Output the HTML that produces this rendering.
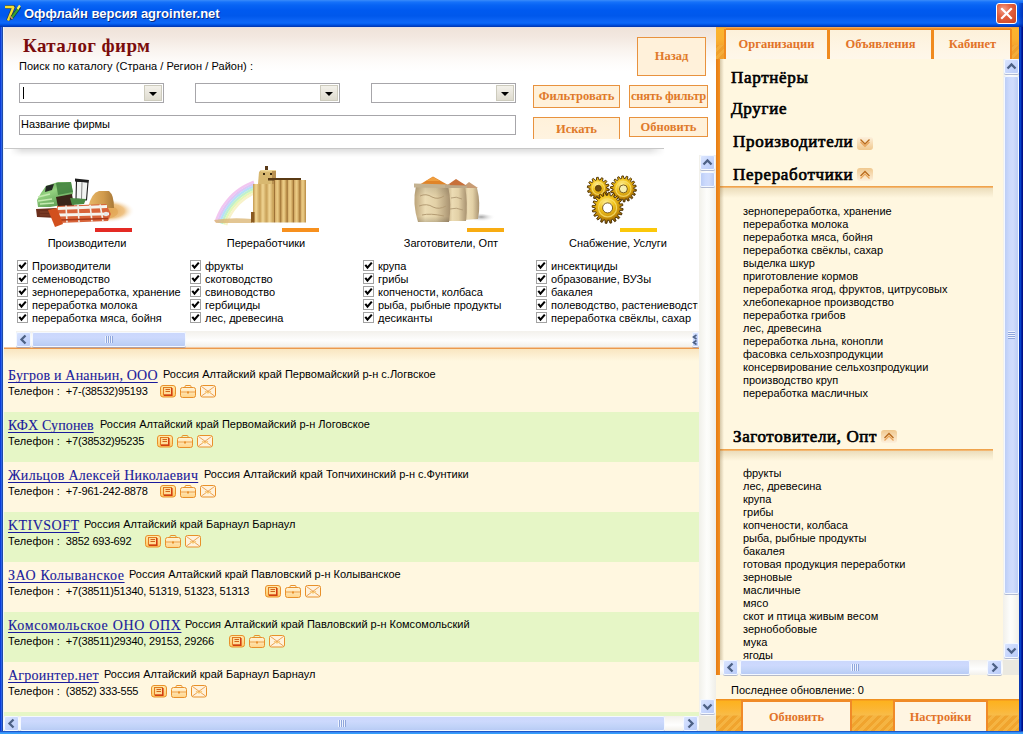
<!DOCTYPE html>
<html><head><meta charset="utf-8"><style>
*{box-sizing:border-box}
html,body{margin:0;padding:0;width:1023px;height:734px;overflow:hidden;background:#0a3fd0;font-family:"Liberation Sans",sans-serif;font-size:11px;color:#000}
.a{position:absolute}
.t{position:absolute;white-space:nowrap;line-height:13px}
.ser{font-family:"Liberation Serif",serif}
#title{left:0;top:0;width:1023px;height:27px;background:linear-gradient(#3a8cfa 0px,#1672fa 2px,#0864f4 5px,#005af0 10px,#0058ec 16px,#0a62f4 20px,#0c68f8 23px,#0056e8 24.5px,#0040c4 26px,#0036ac 27px)}
#ttxt{left:24px;top:5px;font:bold 13px "Liberation Sans",sans-serif;color:#fff;line-height:17px;text-shadow:1px 1px 0 #0a2a80}
#close{left:996px;top:3px;width:21px;height:21px;border:1px solid #fff;border-radius:3px;background:radial-gradient(circle at 35% 30%,#f2a08a 0%,#e2603e 40%,#c94422 100%)}
#hdr{left:3px;top:27px;width:713px;height:122px;background:linear-gradient(#dfe0ee 0px,#efe3da 1px,#f3e8e0 10px,#f9f3ee 22px,#fdfbf9 34px,#fff 44px)}
.dd{position:absolute;height:20px;width:145px;border:1px solid #a7a6aa;background:#fff}
.dd .bt{position:absolute;right:1px;top:1px;width:18px;height:16px;background:linear-gradient(#f3f1ea,#dedbcf);border:1px solid #cdcbbd}
.dd .bt:after{content:"";position:absolute;left:4px;top:6px;border-left:4px solid transparent;border-right:4px solid transparent;border-top:4px solid #000}
.ob{position:absolute;border:1px solid #e8923e;background:#fff1da;color:#e07a2a;font:bold 12.5px "Liberation Serif",serif;text-align:center}
.sbtn{position:absolute;width:15px;height:15px;border-radius:2px;background:linear-gradient(135deg,#dde7fe 0%,#c8d7fd 50%,#b8caf6 100%);box-shadow:inset 0 0 0 1px #f4f8ff,0 1px 0 rgba(90,110,170,0.45)}
.thumbv{position:absolute;border-radius:2px;background:linear-gradient(90deg,#b9cbf4,#cbd9fd 35%,#d0dcfc 60%,#b7caf3);box-shadow:inset 0 0 0 1px #f4f8ff,0 1px 0 rgba(90,110,170,0.45)}
.thumbh{position:absolute;border-radius:2px;background:linear-gradient(#cad7fc,#cdd9fd 35%,#c1d3f8 70%,#b6c9f4);box-shadow:inset 0 0 0 1px #f4f8ff,0 1px 0 rgba(90,110,170,0.45)}
.chev{position:absolute;left:0;top:0}
.cb{position:absolute;width:11px;height:11px;border:1px solid #a2a2a2;background:#fff}
.lnk{position:absolute;white-space:nowrap;font-family:"Liberation Serif",serif;font-size:14px;line-height:17px;color:#1a1a9c;text-decoration:underline;text-underline-offset:2px;text-decoration-skip-ink:none;-webkit-text-stroke:0.1px #1a1a9c}
.tab{background:linear-gradient(#fdf1da,#fef5e4 60%,#fef7ea);color:#e27328;font:bold 12.5px "Liberation Serif",serif;text-align:center}
.tab2{background:#fff5e2;border-left:2px solid #f08a28;border-right:2px solid #f08a28;border-top:2px solid #f08a28;color:#e27328;font:bold 12.3px "Liberation Serif",serif;text-align:center}
.rh{font:17px "Liberation Serif",serif;line-height:20px;color:#000;letter-spacing:0.7px;-webkit-text-stroke:0.65px #000}

.blk{background:linear-gradient(#f2a040 0px,#fcb42c 2px,#fab030 12px,#f6a62e 18px,rgba(0,0,0,0) 18px),repeating-linear-gradient(135deg,#f0a02c 0 3px,#f4ac3a 3px 6px)}
.bbar{background:linear-gradient(#f09020 0px,#f09020 1px,#fdb21e 2px,#fbb634 10px,#f8bc48 16px,rgba(0,0,0,0) 17px),repeating-linear-gradient(135deg,#f0a42e 0 3px,#f5b442 3px 6px)}
</style></head><body>
<svg width="0" height="0" style="position:absolute">
<defs>
<linearGradient id="ig1" x1="0" y1="0" x2="0" y2="1"><stop offset="0" stop-color="#ffeab0"/><stop offset="1" stop-color="#ffc864"/></linearGradient>
<linearGradient id="ig2" x1="0" y1="0" x2="0" y2="1"><stop offset="0" stop-color="#fff4d8"/><stop offset="1" stop-color="#ffd488"/></linearGradient>
<symbol id="i1" viewBox="0 0 16 13"><rect x="0.5" y="0.5" width="15" height="11.5" rx="2.5" fill="url(#ig1)" stroke="#e8902a"/><rect x="3.5" y="2.5" width="8" height="7.5" fill="#ffdc98" stroke="#e07a20"/><path d="M4 10.2 H11.8 V3" stroke="#d23e10" stroke-width="1.6" fill="none"/><path d="M5.5 4.5h4.5M5.5 6.5h4.5" stroke="#d0641c" stroke-width="1"/></symbol>
<symbol id="i2" viewBox="0 0 16 13"><rect x="5" y="0.5" width="6" height="2.5" rx="1" fill="none" stroke="#e8902a"/><rect x="0.5" y="2.5" width="15" height="10" rx="2" fill="url(#ig2)" stroke="#e8902a"/><path d="M1 7h14" stroke="#eca04a"/><rect x="7" y="6.5" width="2" height="2" fill="#e8902a"/></symbol>
<symbol id="i3" viewBox="0 0 16 13"><rect x="0.5" y="0.5" width="15" height="11.5" rx="2" fill="#fff2dc" stroke="#e8902a"/><path d="M1.5 1.5 L14.5 11 M14.5 1.5 L1.5 11" stroke="#e89a46" stroke-width="0.9" fill="none"/><path d="M5 6.2 L8 8 L11 6.2" stroke="#f8c870" stroke-width="1.2" fill="none"/></symbol>
<symbol id="chk" viewBox="0 0 9 9"><path d="M1.3 3.8 L3.5 6.6 L7.8 1.6" stroke="#000" stroke-width="2.1" fill="none"/></symbol>
<linearGradient id="icg1" x1="0" y1="0" x2="0" y2="1"><stop offset="0" stop-color="#fdf0dc"/><stop offset="1" stop-color="#f0c88e"/></linearGradient>
<linearGradient id="icg2" x1="0" y1="0" x2="0" y2="1"><stop offset="0" stop-color="#f0c88e"/><stop offset="1" stop-color="#fdf0dc"/></linearGradient>
<symbol id="dn" viewBox="0 0 16 13"><rect x="0" y="0" width="16" height="13" rx="3" fill="url(#icg1)"/><path d="M3.5 5 L8 9.5 L12.5 5" stroke="#eaa458" stroke-width="1.2" fill="none"/><path d="M3.5 2.5 L8 7 L12.5 2.5" stroke="#b86a1c" stroke-width="1.3" fill="none"/></symbol>
<symbol id="up" viewBox="0 0 16 13"><rect x="0" y="0" width="16" height="13" rx="3" fill="url(#icg2)"/><path d="M3.5 8 L8 3.5 L12.5 8" stroke="#b86a1c" stroke-width="1.3" fill="none"/><path d="M3.5 10.5 L8 6 L12.5 10.5" stroke="#eaa458" stroke-width="1.2" fill="none"/></symbol>
</defs></svg>
<div id="title" class="a"></div>
<svg class="a" style="left:0;top:0" width="24" height="26" viewBox="0 0 24 26">
 <path d="M5 7 H13.5 L8 20.5" stroke="#3a2a00" stroke-width="4" fill="none" stroke-linejoin="round" opacity="0.55"/>
 <path d="M5 7 H13.5 L8 20.5" stroke="#f4e030" stroke-width="2.4" fill="none" stroke-linejoin="bevel"/>
 <path d="M11.5 18 L19 8" stroke="#10240a" stroke-width="3.6" stroke-linecap="round" opacity="0.7"/>
 <path d="M11.5 18 L18.5 8.5" stroke="#38a030" stroke-width="2.2"/>
 <path d="M17.5 9 L20 5.5" stroke="#f8f060" stroke-width="2.2"/>
 <path d="M10 16 L12.5 19" stroke="#c89070" stroke-width="1.5"/>
</svg>
<div id="ttxt" class="a">Оффлайн версия agrointer.net</div>
<div id="close" class="a"><svg width="19" height="19" viewBox="0 0 19 19" style="position:absolute;left:0;top:0"><path d="M5 5 L14 14 M14 5 L5 14" stroke="#fff" stroke-width="2.2" stroke-linecap="square"/></svg></div>
<div id="hdr" class="a"></div>
<div class="t ser" style="left:23px;top:35px;font-weight:bold;font-size:19px;line-height:22px;letter-spacing:0.4px;color:#7a0c0c">Каталог фирм</div>
<div class="t" style="left:19px;top:60px;letter-spacing:0.05px">Поиск по каталогу (Страна / Регион / Район) :</div>
<div class="dd" style="left:19px;top:83px"><div class="a" style="left:3px;top:3px;width:1px;height:12px;background:#000"></div><div class="bt"></div></div>
<div class="dd" style="left:195px;top:83px"><div class="bt"></div></div>
<div class="dd" style="left:371px;top:83px"><div class="bt"></div></div>
<div class="a" style="left:19px;top:115px;width:497px;height:20px;border:1px solid #a7a6aa;background:#fff"></div>
<div class="t" style="left:21px;top:118px">Название фирмы</div>
<div class="ob" style="left:637px;top:37px;width:69px;height:39px;line-height:37px">Назад</div>
<div class="ob" style="left:533px;top:85px;width:87px;height:23px;line-height:21px">Фильтровать</div>
<div class="ob" style="left:629px;top:85px;width:79px;height:23px;line-height:21px;letter-spacing:-0.2px">снять фильтр</div>
<div class="ob" style="left:533px;top:117px;width:87px;height:22px;line-height:22px;border-bottom:none;background:linear-gradient(#fff1da,#fff3e0)">Искать</div>
<div class="ob" style="left:629px;top:117px;width:79px;height:20px;line-height:18px">Обновить</div>
<div class="a" style="left:4px;top:148px;width:660px;height:1px;background:#c8c8c8"></div>
<div class="a" style="left:3px;top:149px;width:697px;height:198px;background:#fff"></div>
<div class="a" style="left:10px;top:149px;width:655px;height:8px;background:linear-gradient(rgba(0,0,0,0.13),rgba(0,0,0,0.03) 70%,rgba(0,0,0,0));-webkit-mask-image:linear-gradient(90deg,transparent,#000 12px,#000 640px,transparent)"></div>
<div class="a" style="left:3px;top:349px;width:696px;height:63px;background:#fff7e0"></div>
<div class="a" style="left:3px;top:412px;width:696px;height:50px;background:#e6f6c6"></div>
<div class="a" style="left:3px;top:462px;width:696px;height:50px;background:#fff7e0"></div>
<div class="a" style="left:3px;top:512px;width:696px;height:50px;background:#e6f6c6"></div>
<div class="a" style="left:3px;top:562px;width:696px;height:50px;background:#fff7e0"></div>
<div class="a" style="left:3px;top:612px;width:696px;height:50px;background:#e6f6c6"></div>
<div class="a" style="left:3px;top:662px;width:696px;height:50px;background:#fff7e0"></div>
<div class="a" style="left:3px;top:712px;width:696px;height:4px;background:#e6f6c6"></div>
<div class="a" style="left:3px;top:349px;width:696px;height:12px;background:linear-gradient(rgba(235,190,120,0.30),rgba(235,190,120,0))"></div>
<div class="a" style="left:3px;top:347px;width:697px;height:1px;background:#f4c8a0"></div>
<div class="a" style="left:3px;top:348px;width:697px;height:1px;background:#eb9a4e"></div>
<div class="a" style="left:3px;top:27px;width:1px;height:704px;background:#eef6fb"></div>
<svg class="a" style="left:30px;top:170px" width="110" height="62" viewBox="30 170 110 62">
<defs><radialGradient id="fld" cx="50%" cy="50%" r="50%"><stop offset="0" stop-color="#e0a048"/><stop offset="0.6" stop-color="#ecb870" stop-opacity="0.85"/><stop offset="1" stop-color="#fff" stop-opacity="0"/></radialGradient>
<linearGradient id="grn" x1="0" y1="0" x2="0.6" y2="1"><stop offset="0" stop-color="#4e9048"/><stop offset="0.45" stop-color="#94d280"/><stop offset="1" stop-color="#5a9a52"/></linearGradient>
<linearGradient id="pile" x1="0" y1="0" x2="1" y2="0"><stop offset="0" stop-color="#e8b868"/><stop offset="0.6" stop-color="#d09a4c"/><stop offset="1" stop-color="#a87838"/></linearGradient></defs>
<ellipse cx="108" cy="211" rx="27" ry="12" fill="url(#fld)"/><ellipse cx="104" cy="212" rx="14" ry="7" fill="#e2a655" opacity="0.7"/>
<path d="M88 208 Q91 193 99 191 L109 191 Q114 195 114 208 Z" fill="url(#pile)"/>
<path d="M37 200 L41 193 L46 186 L58 182 L71 182 L73 193 L68 204 L50 207 L38 207 Z" fill="url(#grn)"/>
<path d="M56 183 L71 182 L73 192 L58 195 Z" fill="#3c7a3a" opacity="0.8"/>
<path d="M38 197 L50 194 M38 201 L52 199 M40 204 L54 203" stroke="#c4eab0" stroke-width="1.3"/>
<path d="M46 186 L54 184 L52 190 L45 192 Z" fill="#242824"/>
<path d="M56 197 L72 194 L74 206 L58 207 Z" fill="#3a2418"/>
<path d="M76.5 181 L88 182 L86.5 200 L76 199 Z" fill="#f2f4f2" stroke="#1c1c1c" stroke-width="1.1"/>
<path d="M75 178.5 L89 180 L88.5 182.5 L75 181.5 Z" fill="#1e1e1e"/>
<path d="M82 182 L81.5 199" stroke="#5a5a5a" stroke-width="0.7"/>
<path d="M70 198 L86 199 L84 204 L72 205 Z" fill="#4a8a44"/>
<path d="M36 209 L56 208 L57 218 L37 217 Z" fill="#6a2e1c"/>
<path d="M40 212h14 M40 215h14" stroke="#8a4a30" stroke-width="0.8"/>
<path d="M57 206 L106 204 L111 214 L108 221 L59 223 Z" fill="#d8643a"/>
<path d="M58 208.5 L107 206.5 M59 215 L109 213.8" stroke="#f6f4ee" stroke-width="2.8"/>
<path d="M66 205.5 L67 222.5 M78 205 L79 222 M90 204.8 L92 221.5 M100 204.5 L103 221" stroke="#f0eee8" stroke-width="1.6"/>
<path d="M60 220 L108 218.5" stroke="#a83818" stroke-width="1.4"/>
<circle cx="106" cy="214" r="2.2" fill="#e8e8e8"/>
<path d="M48 210 L57 208 L63 224 L55 227 Z" fill="#d2501e"/>
</svg>
<svg class="a" style="left:205px;top:160px" width="110" height="66" viewBox="205 160 110 66">
<defs><linearGradient id="rb" x1="0" y1="0" x2="1" y2="0.35">
<stop offset="0" stop-color="#fff" stop-opacity="0"/><stop offset="0.22" stop-color="#f0c0f0"/><stop offset="0.45" stop-color="#a8e4f8"/><stop offset="0.65" stop-color="#c0f0b0"/><stop offset="0.82" stop-color="#f8f0a8"/><stop offset="1" stop-color="#fff" stop-opacity="0"/></linearGradient>
<linearGradient id="cylL" x1="0" y1="0" x2="1" y2="0"><stop offset="0" stop-color="#c49a50"/><stop offset="0.45" stop-color="#f2d896"/><stop offset="1" stop-color="#c8a058"/></linearGradient>
<linearGradient id="cylR" x1="0" y1="0" x2="1" y2="0"><stop offset="0" stop-color="#7a4c16"/><stop offset="0.2" stop-color="#d8b06a"/><stop offset="0.55" stop-color="#eed08a"/><stop offset="1" stop-color="#b88a44"/></linearGradient>
<pattern id="pL" x="253" y="0" width="6.7" height="100" patternUnits="userSpaceOnUse"><rect width="6.7" height="100" fill="url(#cylL)"/></pattern>
<pattern id="pR" x="274" y="0" width="6.4" height="100" patternUnits="userSpaceOnUse"><rect width="6.4" height="100" fill="url(#cylR)"/></pattern>
</defs>
<g opacity="0.95"><path d="M215.7 221.9 L217.0 218.0 L218.6 214.2 L220.4 210.6 L222.5 207.0 L224.8 203.6 L227.3 200.4 L230.0 197.3 L232.9 194.4 L236.0 191.8 L239.3 189.3 L242.7 187.1 L246.3 185.0 L250.0 183.3 L253.8 181.7" stroke="#f2c4f0" stroke-width="2.4" fill="none"/><path d="M217.8 222.5 L219.1 218.8 L220.6 215.1 L222.4 211.6 L224.4 208.2 L226.6 204.9 L229.0 201.8 L231.6 198.8 L234.4 196.1 L237.4 193.5 L240.6 191.1 L243.9 188.9 L247.3 187.0 L250.9 185.3 L254.5 183.8" stroke="#dcc4f6" stroke-width="2.4" fill="none"/><path d="M219.9 223.2 L221.1 219.6 L222.6 216.0 L224.3 212.6 L226.2 209.4 L228.4 206.2 L230.7 203.2 L233.2 200.4 L235.9 197.7 L238.8 195.2 L241.8 192.9 L245.0 190.8 L248.3 188.9 L251.8 187.3 L255.3 185.9" stroke="#b4def8" stroke-width="2.4" fill="none"/><path d="M222.0 223.8 L223.2 220.3 L224.6 217.0 L226.2 213.7 L228.1 210.5 L230.1 207.5 L232.4 204.6 L234.8 201.9 L237.4 199.3 L240.2 196.9 L243.1 194.7 L246.2 192.7 L249.4 190.9 L252.7 189.3 L256.1 187.9" stroke="#bcf0cc" stroke-width="2.4" fill="none"/><path d="M224.1 224.4 L225.3 221.1 L226.6 217.9 L228.2 214.7 L230.0 211.7 L231.9 208.8 L234.1 206.0 L236.4 203.4 L238.9 200.9 L241.6 198.6 L244.4 196.5 L247.3 194.6 L250.4 192.8 L253.5 191.3 L256.8 190.0" stroke="#e4f6b4" stroke-width="2.4" fill="none"/><path d="M226.2 225.1 L227.3 221.9 L228.6 218.8 L230.1 215.8 L231.8 212.9 L233.7 210.1 L235.8 207.4 L238.0 204.9 L240.4 202.5 L243.0 200.3 L245.6 198.3 L248.5 196.4 L251.4 194.8 L254.4 193.3 L257.6 192.1" stroke="#f8f2c8" stroke-width="2.4" fill="none"/></g>
<path d="M214 220 Q232 217 252 219 L252 223 L216 223 Z" fill="#dcb878" opacity="0.8"/>
<path d="M258 184 L259 172 L261 170 L276 170 L276 184 Z" fill="#d8b870"/>
<rect x="261" y="170" width="15" height="1.5" fill="#f0d898"/><rect x="272" y="171" width="4" height="13" fill="#b89050"/>
<rect x="265" y="166" width="3" height="4" fill="#5a3a18"/>
<rect x="263" y="173" width="2" height="2" fill="#3a2a10"/><rect x="270" y="173" width="2" height="2" fill="#3a2a10"/>
<rect x="268" y="178" width="33" height="2.5" fill="#5a3a14"/>
<rect x="253" y="184" width="21" height="38.5" fill="url(#pL)"/>
<rect x="274" y="180" width="32" height="42.5" fill="url(#pR)"/>
<rect x="251" y="212" width="3.5" height="10.5" fill="#8a5a20"/>
</svg>
<svg class="a" style="left:410px;top:170px" width="90" height="56" viewBox="410 170 90 56">
<defs><linearGradient id="sk" x1="0" y1="0" x2="1" y2="0"><stop offset="0" stop-color="#bca47a"/><stop offset="0.3" stop-color="#ecdcb4"/><stop offset="0.6" stop-color="#e2d0a6"/><stop offset="1" stop-color="#a89270"/></linearGradient>
<linearGradient id="skv" x1="0" y1="0" x2="0" y2="1"><stop offset="0" stop-color="#000" stop-opacity="0.12"/><stop offset="0.3" stop-color="#000" stop-opacity="0"/><stop offset="0.85" stop-color="#000" stop-opacity="0"/><stop offset="1" stop-color="#000" stop-opacity="0.15"/></linearGradient>
<radialGradient id="shd" cx="30%" cy="50%" r="60%"><stop offset="0" stop-color="#808080" stop-opacity="0.75"/><stop offset="1" stop-color="#fff" stop-opacity="0"/></radialGradient></defs>
<path d="M476 213 L498 216 L492 221 L474 221 Z" fill="url(#shd)"/>
<path d="M463 187 L477 188 Q481 203 478 219 L464 220 Z" fill="url(#sk)"/>
<path d="M446 185 L465 186 Q468 203 466 221 L447 221 Z" fill="url(#sk)"/>
<path d="M416 186 L448 186 Q452 203 449 222 L418 222 Q412 203 416 186 Z" fill="url(#sk)"/>
<path d="M416 186 L448 186 Q452 203 449 222 L418 222 Q412 203 416 186 Z" fill="url(#skv)"/>
<path d="M462 188 L469 182 L478 188 Z" fill="#c89c74"/>
<path d="M446 186 L456 179 L467 186 Z" fill="#c8703a"/>
<path d="M419 185 L433 176.5 L448 185 Z" fill="#e08428"/><path d="M426 181 L433 177 L440 181 Z" fill="#f0a040"/>

<path d="M414 183.5 L450 184.5 L450 188 L414 187.5 Z" fill="#c4b290"/>
<path d="M445 185 L467 185.5 L467 188 L445 188 Z" fill="#bca888"/>
<path d="M420 196 Q426 193 432 197 Q438 200 444 196 M419 206 Q427 203 433 207 Q439 210 446 206 M422 215 Q430 213 444 216" stroke="#b49c74" stroke-width="1" fill="none"/>
<path d="M451 198 Q456 196 462 199 M450 209 Q456 207 463 210" stroke="#b09a74" stroke-width="0.9" fill="none"/>
</svg>
<svg class="a" style="left:580px;top:172px" width="60" height="56" viewBox="580 172 60 56"><defs><radialGradient id="gg" cx="45%" cy="35%" r="70%"><stop offset="0" stop-color="#fff2a0"/><stop offset="0.35" stop-color="#f2c41c"/><stop offset="0.7" stop-color="#c48a08"/><stop offset="1" stop-color="#5a3800"/></radialGradient></defs><path d="M606.80,188.30 L609.28,189.04 L609.02,190.75 L606.44,190.74 L605.96,191.99 L607.87,193.73 L606.90,195.16 L604.57,194.03 L603.60,194.95 L604.56,197.34 L603.07,198.21 L601.46,196.19 L600.19,196.59 L600.02,199.16 L598.30,199.30 L597.73,196.78 L596.41,196.59 L595.14,198.84 L593.53,198.21 L594.11,195.69 L593.00,194.95 L590.88,196.42 L589.70,195.16 L591.31,193.14 L590.64,191.99 L588.09,192.40 L587.58,190.75 L589.90,189.63 L589.80,188.30 L587.32,187.56 L587.58,185.85 L590.16,185.86 L590.64,184.61 L588.73,182.87 L589.70,181.44 L592.03,182.57 L593.00,181.65 L592.04,179.26 L593.53,178.39 L595.14,180.41 L596.41,180.01 L596.58,177.44 L598.30,177.30 L598.87,179.82 L600.19,180.01 L601.46,177.76 L603.07,178.39 L602.49,180.91 L603.60,181.65 L605.72,180.18 L606.90,181.44 L605.29,183.46 L605.96,184.61 L608.51,184.20 L609.02,185.85 L606.70,186.97Z" fill="url(#gg)" stroke="#4a2e00" stroke-width="0.9"/><circle cx="598.3" cy="188.3" r="6.12" fill="none" stroke="#f8e070" stroke-width="1.2" opacity="0.8"/><circle cx="598.3" cy="188.3" r="3" fill="#6a4a10" stroke="#5a3a00" stroke-width="0.8"/><path d="M633.90,188.90 L636.38,189.58 L636.20,191.16 L633.63,191.26 L633.27,192.49 L635.37,193.98 L634.66,195.40 L632.21,194.62 L631.44,195.65 L632.91,197.77 L631.76,198.86 L629.72,197.29 L628.65,197.99 L629.30,200.48 L627.85,201.12 L626.47,198.94 L625.22,199.24 L624.98,201.80 L623.40,201.90 L622.85,199.39 L621.58,199.24 L620.48,201.57 L618.95,201.12 L619.30,198.57 L618.15,197.99 L616.32,199.80 L615.04,198.86 L616.24,196.58 L615.36,195.65 L613.02,196.72 L612.14,195.40 L614.04,193.67 L613.53,192.49 L610.97,192.70 L610.60,191.16 L612.98,190.18 L612.90,188.90 L610.42,188.22 L610.60,186.64 L613.17,186.54 L613.53,185.31 L611.43,183.82 L612.14,182.40 L614.59,183.18 L615.36,182.15 L613.89,180.03 L615.04,178.94 L617.08,180.51 L618.15,179.81 L617.50,177.32 L618.95,176.68 L620.33,178.86 L621.58,178.56 L621.82,176.00 L623.40,175.90 L623.95,178.41 L625.22,178.56 L626.32,176.23 L627.85,176.68 L627.50,179.23 L628.65,179.81 L630.48,178.00 L631.76,178.94 L630.56,181.22 L631.44,182.15 L633.78,181.08 L634.66,182.40 L632.76,184.13 L633.27,185.31 L635.83,185.10 L636.20,186.64 L633.82,187.62Z" fill="url(#gg)" stroke="#4a2e00" stroke-width="0.9"/><circle cx="623.4" cy="188.9" r="7.56" fill="none" stroke="#f8e070" stroke-width="1.2" opacity="0.8"/><circle cx="623.4" cy="188.9" r="4" fill="#f8f0b0" stroke="#5a3a00" stroke-width="0.8"/><path d="M620.10,207.90 L623.08,208.63 L622.91,210.32 L619.84,210.43 L619.49,211.76 L622.10,213.38 L621.41,214.94 L618.46,214.09 L617.71,215.25 L619.70,217.59 L618.56,218.86 L616.01,217.15 L614.95,218.01 L616.11,220.86 L614.64,221.71 L612.74,219.29 L611.46,219.79 L611.69,222.85 L610.02,223.21 L608.97,220.32 L607.60,220.40 L606.87,223.38 L605.18,223.21 L605.07,220.14 L603.74,219.79 L602.12,222.40 L600.56,221.71 L601.41,218.76 L600.25,218.01 L597.91,220.00 L596.64,218.86 L598.35,216.31 L597.49,215.25 L594.64,216.41 L593.79,214.94 L596.21,213.04 L595.71,211.76 L592.65,211.99 L592.29,210.32 L595.18,209.27 L595.10,207.90 L592.12,207.17 L592.29,205.48 L595.36,205.37 L595.71,204.04 L593.10,202.42 L593.79,200.86 L596.74,201.71 L597.49,200.55 L595.50,198.21 L596.64,196.94 L599.19,198.65 L600.25,197.79 L599.09,194.94 L600.56,194.09 L602.46,196.51 L603.74,196.01 L603.51,192.95 L605.18,192.59 L606.23,195.48 L607.60,195.40 L608.33,192.42 L610.02,192.59 L610.13,195.66 L611.46,196.01 L613.08,193.40 L614.64,194.09 L613.79,197.04 L614.95,197.79 L617.29,195.80 L618.56,196.94 L616.85,199.49 L617.71,200.55 L620.56,199.39 L621.41,200.86 L618.99,202.76 L619.49,204.04 L622.55,203.81 L622.91,205.48 L620.02,206.53Z" fill="url(#gg)" stroke="#4a2e00" stroke-width="0.9"/><circle cx="607.6" cy="207.9" r="9.00" fill="none" stroke="#f8e070" stroke-width="1.2" opacity="0.8"/><circle cx="607.6" cy="207.9" r="5" fill="#fff" stroke="#5a3a00" stroke-width="0.8"/></svg>

<div class="a" style="left:95px;top:228px;width:37px;height:4px;background:#e42a24"></div>
<div class="a" style="left:282px;top:228px;width:37px;height:4px;background:#f7901e"></div>
<div class="a" style="left:467px;top:228px;width:37px;height:4px;background:#f8ac12"></div>
<div class="a" style="left:620px;top:228px;width:37px;height:4px;background:#fbc80a"></div>
<div class="t" style="left:-13px;width:200px;text-align:center;top:237px">Производители</div>
<div class="t" style="left:166px;width:200px;text-align:center;top:237px">Переработчики</div>
<div class="t" style="left:351px;width:200px;text-align:center;top:237px">Заготовители, Опт</div>
<div class="t" style="left:518px;width:200px;text-align:center;top:237px">Снабжение, Услуги</div>
<div class="a" style="left:3px;top:250px;width:695px;height:80px;overflow:hidden">
<div class="cb" style="left:14px;top:10px"><svg class="chev" width="9" height="9"><use href="#chk"/></svg></div>
<div class="t" style="left:29px;top:10px">Производители</div>
<div class="cb" style="left:14px;top:23px"><svg class="chev" width="9" height="9"><use href="#chk"/></svg></div>
<div class="t" style="left:29px;top:23px">семеноводство</div>
<div class="cb" style="left:14px;top:36px"><svg class="chev" width="9" height="9"><use href="#chk"/></svg></div>
<div class="t" style="left:29px;top:36px">зернопереработка, хранение</div>
<div class="cb" style="left:14px;top:49px"><svg class="chev" width="9" height="9"><use href="#chk"/></svg></div>
<div class="t" style="left:29px;top:49px">переработка молока</div>
<div class="cb" style="left:14px;top:62px"><svg class="chev" width="9" height="9"><use href="#chk"/></svg></div>
<div class="t" style="left:29px;top:62px">переработка мяса, бойня</div>
<div class="cb" style="left:187px;top:10px"><svg class="chev" width="9" height="9"><use href="#chk"/></svg></div>
<div class="t" style="left:202px;top:10px">фрукты</div>
<div class="cb" style="left:187px;top:23px"><svg class="chev" width="9" height="9"><use href="#chk"/></svg></div>
<div class="t" style="left:202px;top:23px">скотоводство</div>
<div class="cb" style="left:187px;top:36px"><svg class="chev" width="9" height="9"><use href="#chk"/></svg></div>
<div class="t" style="left:202px;top:36px">свиноводство</div>
<div class="cb" style="left:187px;top:49px"><svg class="chev" width="9" height="9"><use href="#chk"/></svg></div>
<div class="t" style="left:202px;top:49px">гербициды</div>
<div class="cb" style="left:187px;top:62px"><svg class="chev" width="9" height="9"><use href="#chk"/></svg></div>
<div class="t" style="left:202px;top:62px">лес, древесина</div>
<div class="cb" style="left:360px;top:10px"><svg class="chev" width="9" height="9"><use href="#chk"/></svg></div>
<div class="t" style="left:375px;top:10px">крупа</div>
<div class="cb" style="left:360px;top:23px"><svg class="chev" width="9" height="9"><use href="#chk"/></svg></div>
<div class="t" style="left:375px;top:23px">грибы</div>
<div class="cb" style="left:360px;top:36px"><svg class="chev" width="9" height="9"><use href="#chk"/></svg></div>
<div class="t" style="left:375px;top:36px">копчености, колбаса</div>
<div class="cb" style="left:360px;top:49px"><svg class="chev" width="9" height="9"><use href="#chk"/></svg></div>
<div class="t" style="left:375px;top:49px">рыба, рыбные продукты</div>
<div class="cb" style="left:360px;top:62px"><svg class="chev" width="9" height="9"><use href="#chk"/></svg></div>
<div class="t" style="left:375px;top:62px">десиканты</div>
<div class="cb" style="left:533px;top:10px"><svg class="chev" width="9" height="9"><use href="#chk"/></svg></div>
<div class="t" style="left:548px;top:10px">инсектициды</div>
<div class="cb" style="left:533px;top:23px"><svg class="chev" width="9" height="9"><use href="#chk"/></svg></div>
<div class="t" style="left:548px;top:23px">образование, ВУЗы</div>
<div class="cb" style="left:533px;top:36px"><svg class="chev" width="9" height="9"><use href="#chk"/></svg></div>
<div class="t" style="left:548px;top:36px">бакалея</div>
<div class="cb" style="left:533px;top:49px"><svg class="chev" width="9" height="9"><use href="#chk"/></svg></div>
<div class="t" style="left:548px;top:49px">полеводство, растениеводство</div>
<div class="cb" style="left:533px;top:62px"><svg class="chev" width="9" height="9"><use href="#chk"/></svg></div>
<div class="t" style="left:548px;top:62px">переработка свёклы, сахар</div>
</div>
<div class="a" style="left:16px;top:331px;width:683px;height:16px;background:linear-gradient(#f3f1ec,#fefefe 60%,#f2f0ea)"></div>
<div class="sbtn" style="left:16px;top:332px;width:15px;height:15px"><svg class="chev" width="15" height="15"><path d="M9.5 3.5 L5.5 7.5 L9.5 11.5" stroke="#4d6185" stroke-width="2.3" fill="none"/></svg></div>
<div class="thumbh" style="left:32px;top:332px;width:154px;height:15px"><svg class="chev" width="154" height="15"><path d="M73.5 4v7M75.5 4v7M77.5 4v7M79.5 4v7" stroke="#eef3fe"/><path d="M74.5 4v7M76.5 4v7M78.5 4v7M80.5 4v7" stroke="#8fa6dc"/></svg></div>
<div class="sbtn" style="left:692px;top:332px;width:7px;height:15px"><svg class="chev" width="7" height="15"><path d="M4.5 3 L1.5 5 L4.5 7 M4.5 8.5 L1.5 10.5 L4.5 12.5" stroke="#4d6185" stroke-width="1.6" fill="none"/></svg></div>
<div class="lnk" style="left:8px;top:367px;letter-spacing:0.2px">Бугров и Ананьин, ООО</div>
<div class="t" style="left:163px;top:368px">Россия Алтайский край Первомайский р-н с.Логвское</div>
<div class="t" style="left:8px;top:385px">Телефон :&nbsp; <span style="letter-spacing:-0.2px">+7-(38532)95193</span></div>
<svg class="a" style="left:160px;top:385px" width="16" height="13"><use href="#i1"/></svg>
<svg class="a" style="left:180px;top:385px" width="16" height="13"><use href="#i2"/></svg>
<svg class="a" style="left:200px;top:385px" width="16" height="13"><use href="#i3"/></svg>
<div class="lnk" style="left:8px;top:417px;letter-spacing:0.13px">КФХ Супонев</div>
<div class="t" style="left:100px;top:418px">Россия Алтайский край Первомайский р-н Логовское</div>
<div class="t" style="left:8px;top:435px">Телефон :&nbsp; <span style="letter-spacing:-0.2px">+7(38532)95235</span></div>
<svg class="a" style="left:157px;top:435px" width="16" height="13"><use href="#i1"/></svg>
<svg class="a" style="left:177px;top:435px" width="16" height="13"><use href="#i2"/></svg>
<svg class="a" style="left:197px;top:435px" width="16" height="13"><use href="#i3"/></svg>
<div class="lnk" style="left:8px;top:467px;letter-spacing:0.3px">Жильцов Алексей Николаевич</div>
<div class="t" style="left:204px;top:468px">Россия Алтайский край Топчихинский р-н с.Фунтики</div>
<div class="t" style="left:8px;top:485px">Телефон :&nbsp; <span style="letter-spacing:-0.2px">+7-961-242-8878</span></div>
<svg class="a" style="left:160px;top:485px" width="16" height="13"><use href="#i1"/></svg>
<svg class="a" style="left:180px;top:485px" width="16" height="13"><use href="#i2"/></svg>
<svg class="a" style="left:200px;top:485px" width="16" height="13"><use href="#i3"/></svg>
<div class="lnk" style="left:8px;top:517px;letter-spacing:0.47px">KTIVSOFT</div>
<div class="t" style="left:84px;top:518px">Россия Алтайский край Барнаул Барнаул</div>
<div class="t" style="left:8px;top:535px">Телефон :&nbsp; <span style="letter-spacing:-0.2px">3852 693-692</span></div>
<svg class="a" style="left:145px;top:535px" width="16" height="13"><use href="#i1"/></svg>
<svg class="a" style="left:165px;top:535px" width="16" height="13"><use href="#i2"/></svg>
<svg class="a" style="left:185px;top:535px" width="16" height="13"><use href="#i3"/></svg>
<div class="lnk" style="left:8px;top:567px;letter-spacing:0.59px">ЗАО Колыванское</div>
<div class="t" style="left:129px;top:568px">Россия Алтайский край Павловский р-н Колыванское</div>
<div class="t" style="left:8px;top:585px">Телефон :&nbsp; <span style="letter-spacing:-0.2px">+7(38511)51340, 51319, 51323, 51313</span></div>
<svg class="a" style="left:265px;top:585px" width="16" height="13"><use href="#i1"/></svg>
<svg class="a" style="left:285px;top:585px" width="16" height="13"><use href="#i2"/></svg>
<svg class="a" style="left:305px;top:585px" width="16" height="13"><use href="#i3"/></svg>
<div class="lnk" style="left:8px;top:617px;letter-spacing:0.66px">Комсомольское ОНО ОПХ</div>
<div class="t" style="left:185px;top:618px">Россия Алтайский край Павловский р-н Комсомольский</div>
<div class="t" style="left:8px;top:635px">Телефон :&nbsp; <span style="letter-spacing:-0.2px">+7(38511)29340, 29153, 29266</span></div>
<svg class="a" style="left:229px;top:635px" width="16" height="13"><use href="#i1"/></svg>
<svg class="a" style="left:249px;top:635px" width="16" height="13"><use href="#i2"/></svg>
<svg class="a" style="left:269px;top:635px" width="16" height="13"><use href="#i3"/></svg>
<div class="lnk" style="left:8px;top:667px;letter-spacing:0.25px">Агроинтер.нет</div>
<div class="t" style="left:104px;top:668px">Россия Алтайский край Барнаул Барнаул</div>
<div class="t" style="left:8px;top:685px">Телефон :&nbsp; <span style="letter-spacing:-0.2px">(3852) 333-555</span></div>
<svg class="a" style="left:151px;top:685px" width="16" height="13"><use href="#i1"/></svg>
<svg class="a" style="left:171px;top:685px" width="16" height="13"><use href="#i2"/></svg>
<svg class="a" style="left:191px;top:685px" width="16" height="13"><use href="#i3"/></svg>
<div class="a" style="left:699px;top:149px;width:17px;height:567px;background:linear-gradient(90deg,#f1f0ea,#fdfdfb 45%,#fbfbf8 60%,#efeee8)"></div>
<div class="a" style="left:699px;top:149px;width:17px;height:6px;background:#fff"></div>
<div class="sbtn" style="left:700px;top:155px;width:15px;height:15px"><svg class="chev" width="15" height="15"><path d="M3.5 9.5 L7.5 5.5 L11.5 9.5" stroke="#4d6185" stroke-width="2.3" fill="none"/></svg></div>
<div class="thumbv" style="left:700px;top:172px;width:15px;height:15px"></div>
<div class="sbtn" style="left:700px;top:699px;width:15px;height:15px"><svg class="chev" width="15" height="15"><path d="M3.5 5.5 L7.5 9.5 L11.5 5.5" stroke="#4d6185" stroke-width="2.3" fill="none"/></svg></div>
<div class="a" style="left:3px;top:716px;width:696px;height:15px;background:linear-gradient(#f3f1ec,#fefefe 60%,#f2f0ea)"></div>
<div class="a" style="left:699px;top:716px;width:17px;height:15px;background:#ebe9e0"></div>
<div class="sbtn" style="left:4px;top:716px;width:15px;height:15px"><svg class="chev" width="15" height="15"><path d="M9.5 3.5 L5.5 7.5 L9.5 11.5" stroke="#4d6185" stroke-width="2.3" fill="none"/></svg></div>
<div class="thumbh" style="left:20px;top:716px;width:645px;height:15px"><svg class="chev" width="645" height="15"><path d="M318.5 4v7M320.5 4v7M322.5 4v7M324.5 4v7" stroke="#eef3fe"/><path d="M319.5 4v7M321.5 4v7M323.5 4v7M325.5 4v7" stroke="#8fa6dc"/></svg></div>
<div class="sbtn" style="left:683px;top:716px;width:15px;height:15px"><svg class="chev" width="15" height="15"><path d="M5.5 3.5 L9.5 7.5 L5.5 11.5" stroke="#4d6185" stroke-width="2.3" fill="none"/></svg></div>
<div class="a" style="left:716px;top:27px;width:303px;height:704px;background:#fff7e1"></div>
<div class="a" style="left:716px;top:27px;width:303px;height:3px;background:linear-gradient(#f6b06a,#f08a1e 60%,#ee8418)"></div>
<div class="a blk" style="left:716px;top:27px;width:10px;height:32px"></div>
<div class="a blk" style="left:1011px;top:27px;width:8px;height:32px"></div>
<div class="a tab" style="left:726px;top:30px;width:101px;height:29px;line-height:28px">Организации</div>
<div class="a tab" style="left:830px;top:30px;width:101px;height:29px;line-height:28px">Объявления</div>
<div class="a tab" style="left:934px;top:30px;width:77px;height:29px;line-height:28px">Кабинет</div>
<div class="a" style="left:724px;top:29px;width:2px;height:30px;background:#f08a1e"></div>
<div class="a" style="left:827px;top:29px;width:3px;height:30px;background:#f08a1e"></div>
<div class="a" style="left:931px;top:29px;width:3px;height:30px;background:#f08a1e"></div>
<div class="a" style="left:1010px;top:29px;width:2px;height:30px;background:#f08a1e"></div>
<div class="a" style="left:720px;top:59px;width:284px;height:601px;background:#fff7e0;overflow:hidden"><div class="t rh" style="left:11px;top:9px">Партнёры</div>
<div class="t rh" style="left:11px;top:40px">Другие</div>
<div class="t rh" style="left:13px;top:73px">Производители</div>
<svg class="a" style="left:137px;top:78px" width="16" height="13"><use href="#dn"/></svg>
<div class="t rh" style="left:13px;top:106px">Переработчики</div>
<svg class="a" style="left:137px;top:109px" width="16" height="13"><use href="#up"/></svg>
<div class="a" style="left:0;top:127px;width:273px;height:2px;background:linear-gradient(#ee9a3a,#f4c084)"></div>
<div class="a" style="left:0;top:129px;width:273px;height:10px;background:linear-gradient(rgba(190,160,100,0.30),rgba(190,160,100,0))"></div>
<div class="t" style="left:23px;top:146px">зернопереработка, хранение</div>
<div class="t" style="left:23px;top:159px">переработка молока</div>
<div class="t" style="left:23px;top:172px">переработка мяса, бойня</div>
<div class="t" style="left:23px;top:185px">переработка свёклы, сахар</div>
<div class="t" style="left:23px;top:198px">выделка шкур</div>
<div class="t" style="left:23px;top:211px">приготовление кормов</div>
<div class="t" style="left:23px;top:224px">переработка ягод, фруктов, цитрусовых</div>
<div class="t" style="left:23px;top:237px">хлебопекарное производство</div>
<div class="t" style="left:23px;top:250px">переработка грибов</div>
<div class="t" style="left:23px;top:263px">лес, древесина</div>
<div class="t" style="left:23px;top:276px">переработка льна, конопли</div>
<div class="t" style="left:23px;top:289px">фасовка сельхозпродукции</div>
<div class="t" style="left:23px;top:302px">консервирование сельхозпродукции</div>
<div class="t" style="left:23px;top:315px">производство круп</div>
<div class="t" style="left:23px;top:328px">переработка масличных</div>
<div class="t rh" style="left:13px;top:368px;letter-spacing:0.62px">Заготовители, Опт</div>
<svg class="a" style="left:161px;top:371px" width="16" height="13"><use href="#up"/></svg>
<div class="a" style="left:0;top:390px;width:273px;height:2px;background:linear-gradient(#ee9a3a,#f4c084)"></div>
<div class="a" style="left:0;top:392px;width:273px;height:10px;background:linear-gradient(rgba(190,160,100,0.30),rgba(190,160,100,0))"></div>
<div class="t" style="left:23px;top:408px">фрукты</div>
<div class="t" style="left:23px;top:421px">лес, древесина</div>
<div class="t" style="left:23px;top:434px">крупа</div>
<div class="t" style="left:23px;top:447px">грибы</div>
<div class="t" style="left:23px;top:460px">копчености, колбаса</div>
<div class="t" style="left:23px;top:473px">рыба, рыбные продукты</div>
<div class="t" style="left:23px;top:486px">бакалея</div>
<div class="t" style="left:23px;top:499px">готовая продукция переработки</div>
<div class="t" style="left:23px;top:512px">зерновые</div>
<div class="t" style="left:23px;top:525px">масличные</div>
<div class="t" style="left:23px;top:538px">мясо</div>
<div class="t" style="left:23px;top:551px">скот и птица живым весом</div>
<div class="t" style="left:23px;top:564px">зернобобовые</div>
<div class="t" style="left:23px;top:577px">мука</div>
<div class="t" style="left:23px;top:590px">ягоды</div></div>
<div class="a" style="left:716px;top:59px;width:4px;height:616px;background:linear-gradient(90deg,#e67c12,#f39024)"></div>
<div class="a" style="left:720px;top:59px;width:4px;height:601px;background:linear-gradient(90deg,rgba(120,90,40,0.30),rgba(120,90,40,0))"></div>
<div class="a" style="left:1003px;top:59px;width:16px;height:601px;background:linear-gradient(90deg,#f1f0ea,#fdfdfb 45%,#fbfbf8 60%,#efeee8)"></div>
<div class="sbtn" style="left:1004px;top:59px;width:15px;height:15px"><svg class="chev" width="15" height="15"><path d="M3.5 9.5 L7.5 5.5 L11.5 9.5" stroke="#4d6185" stroke-width="2.3" fill="none"/></svg></div>
<div class="thumbv" style="left:1004px;top:76px;width:15px;height:518px"><svg class="chev" width="15" height="518"><path d="M4 255.5h7M4 257.5h7M4 259.5h7M4 261.5h7" stroke="#eef3fe"/><path d="M4 256.5h7M4 258.5h7M4 260.5h7M4 262.5h7" stroke="#8fa6dc"/></svg></div>
<div class="sbtn" style="left:1004px;top:643px;width:15px;height:15px"><svg class="chev" width="15" height="15"><path d="M3.5 5.5 L7.5 9.5 L11.5 5.5" stroke="#4d6185" stroke-width="2.3" fill="none"/></svg></div>
<div class="a" style="left:720px;top:660px;width:283px;height:15px;background:linear-gradient(#f3f1ec,#fefefe 60%,#f2f0ea)"></div>
<div class="a" style="left:1003px;top:660px;width:16px;height:15px;background:#ebe9e0"></div>
<div class="sbtn" style="left:723px;top:660px;width:15px;height:15px"><svg class="chev" width="15" height="15"><path d="M9.5 3.5 L5.5 7.5 L9.5 11.5" stroke="#4d6185" stroke-width="2.3" fill="none"/></svg></div>
<div class="thumbh" style="left:740px;top:660px;width:230px;height:15px"><svg class="chev" width="230" height="15"><path d="M111.5 4v7M113.5 4v7M115.5 4v7M117.5 4v7" stroke="#eef3fe"/><path d="M112.5 4v7M114.5 4v7M116.5 4v7M118.5 4v7" stroke="#8fa6dc"/></svg></div>
<div class="sbtn" style="left:987px;top:660px;width:15px;height:15px"><svg class="chev" width="15" height="15"><path d="M5.5 3.5 L9.5 7.5 L5.5 11.5" stroke="#4d6185" stroke-width="2.3" fill="none"/></svg></div>
<div class="t" style="left:731px;top:684px">Последнее обновление: 0</div>
<div class="a bbar" style="left:716px;top:699px;width:303px;height:32px"></div>
<div class="a tab2" style="left:741px;top:700px;width:111px;height:31px;line-height:30px">Обновить</div>
<div class="a tab2" style="left:893px;top:700px;width:95px;height:31px;line-height:30px">Настройки</div>
<div class="a" style="left:0;top:27px;width:3px;height:707px;background:linear-gradient(90deg,#0a3cd8 0 1px,#2c62e6 1px 2px,#1e4aa8 2px 3px)"></div>
<div class="a" style="left:1019px;top:3px;width:4px;height:24px;background:linear-gradient(90deg,rgba(0,40,160,0.2),rgba(0,20,140,0.55))"></div>
<div class="a" style="left:1019px;top:27px;width:4px;height:707px;background:linear-gradient(90deg,#0a3ab4 0 1px,#0844cc 1px 2px,#0024a4 2px 3px,#000e8a 3px 4px)"></div>
<div class="a" style="left:0;top:731px;width:1023px;height:3px;background:linear-gradient(#1c58c8 0 1px,#3a8cf6 1px 2px,#34a0fa 2px 3px)"></div>
</body></html>
